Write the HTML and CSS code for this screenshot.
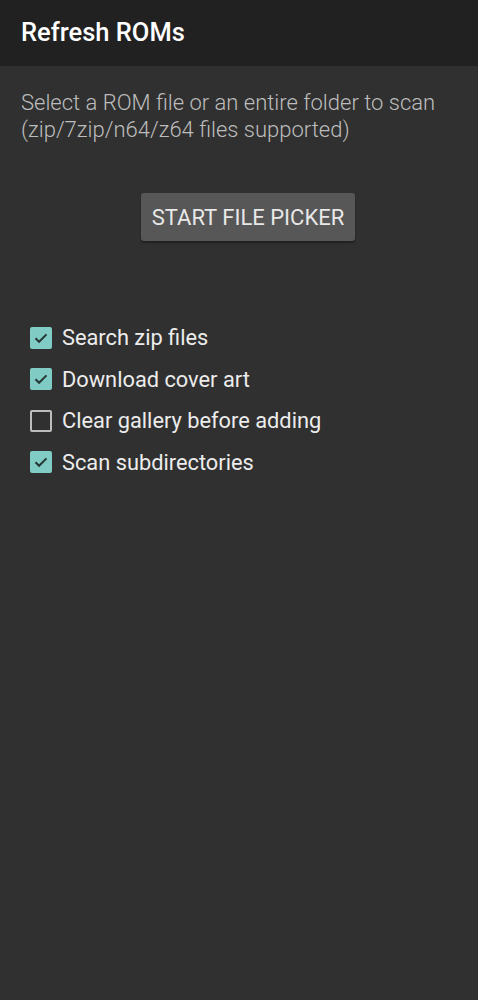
FILE: index.html
```html
<!doctype html>
<html lang="en">
	<head>
		<meta charset="utf-8">
		<link rel="stylesheet" href="styles.css">
		<title>Refresh ROMs</title>
	</head>
	<body>
		<header class="toolbar">
			<h1>Refresh ROMs</h1>
		</header>
		<div class="content">
			<p class="hint">Select a ROM file or an entire folder to scan (zip/7zip/n64/z64 files supported)</p>
			<div class="picker">
				<button class="picker-btn">START FILE PICKER</button>
			</div>
			<ul class="options">
				<li class="option">
					<span class="box checked"><svg viewBox="0 0 22 22"><path d="M5.5 11.2l3.6 3.6 7.4-7.4" /></svg></span>
					<span>Search zip files</span>
				</li>
				<li class="option">
					<span class="box checked"><svg viewBox="0 0 22 22"><path d="M5.5 11.2l3.6 3.6 7.4-7.4" /></svg></span>
					<span>Download cover art</span>
				</li>
				<li class="option">
					<span class="box"></span>
					<span>Clear gallery before adding</span>
				</li>
				<li class="option">
					<span class="box checked"><svg viewBox="0 0 22 22"><path d="M5.5 11.2l3.6 3.6 7.4-7.4" /></svg></span>
					<span>Scan subdirectories</span>
				</li>
			</ul>
		</div>
	</body>
</html>
```

FILE: styles.css
```css
body {
	background: #303030;
	font-family: Roboto, 'Noto Sans', sans-serif;
	margin: 0;
	height: 1000px;
}

.toolbar {
	background: #212121;
	height: 66px;
	display: flex;
	align-items: center;
	padding: 0 21px;
	box-sizing: border-box;
}

.toolbar h1 {
	color: #fff;
	font-size: 25.5px;
	font-weight: 500;
	margin: 0 0 2px;
}

.content {
	padding: 23px 21px 0;
}

.hint {
	color: #bdbdbd;
	font-size: 22px;
	font-weight: 300;
	line-height: 27px;
	margin: 0;
}

.picker {
	display: flex;
	justify-content: center;
	margin: 50px 0 0 18px;
}

.picker-btn {
	background: #575757;
	border: 0;
	border-radius: 3px;
	box-shadow: 0 2px 2px rgba(0, 0, 0, .35);
	color: #e8e8e8;
	font: 400 22px Roboto, sans-serif;
	height: 48px;
	padding: 0 11px;
	white-space: nowrap;
	min-width: 214px;
}

.options {
	list-style: none;
	margin: 76px 0 0;
	padding: 0 0 0 9px;
}

.option {
	align-items: center;
	color: #ececec;
	display: flex;
	font-size: 21.8px;
	height: 41.5px;
}

.box {
	border: 2px solid #bdbdbd;
	border-radius: 2px;
	box-sizing: border-box;
	height: 22px;
	margin-right: 10px;
	width: 22px;
}

.box.checked {
	background: #80cbc4;
	border-color: #80cbc4;
}

.box svg {
	display: block;
	height: 22px;
	margin: -2px;
	width: 22px;
}

.box path {
	fill: none;
	stroke: #263836;
	stroke-width: 2;
}
```
